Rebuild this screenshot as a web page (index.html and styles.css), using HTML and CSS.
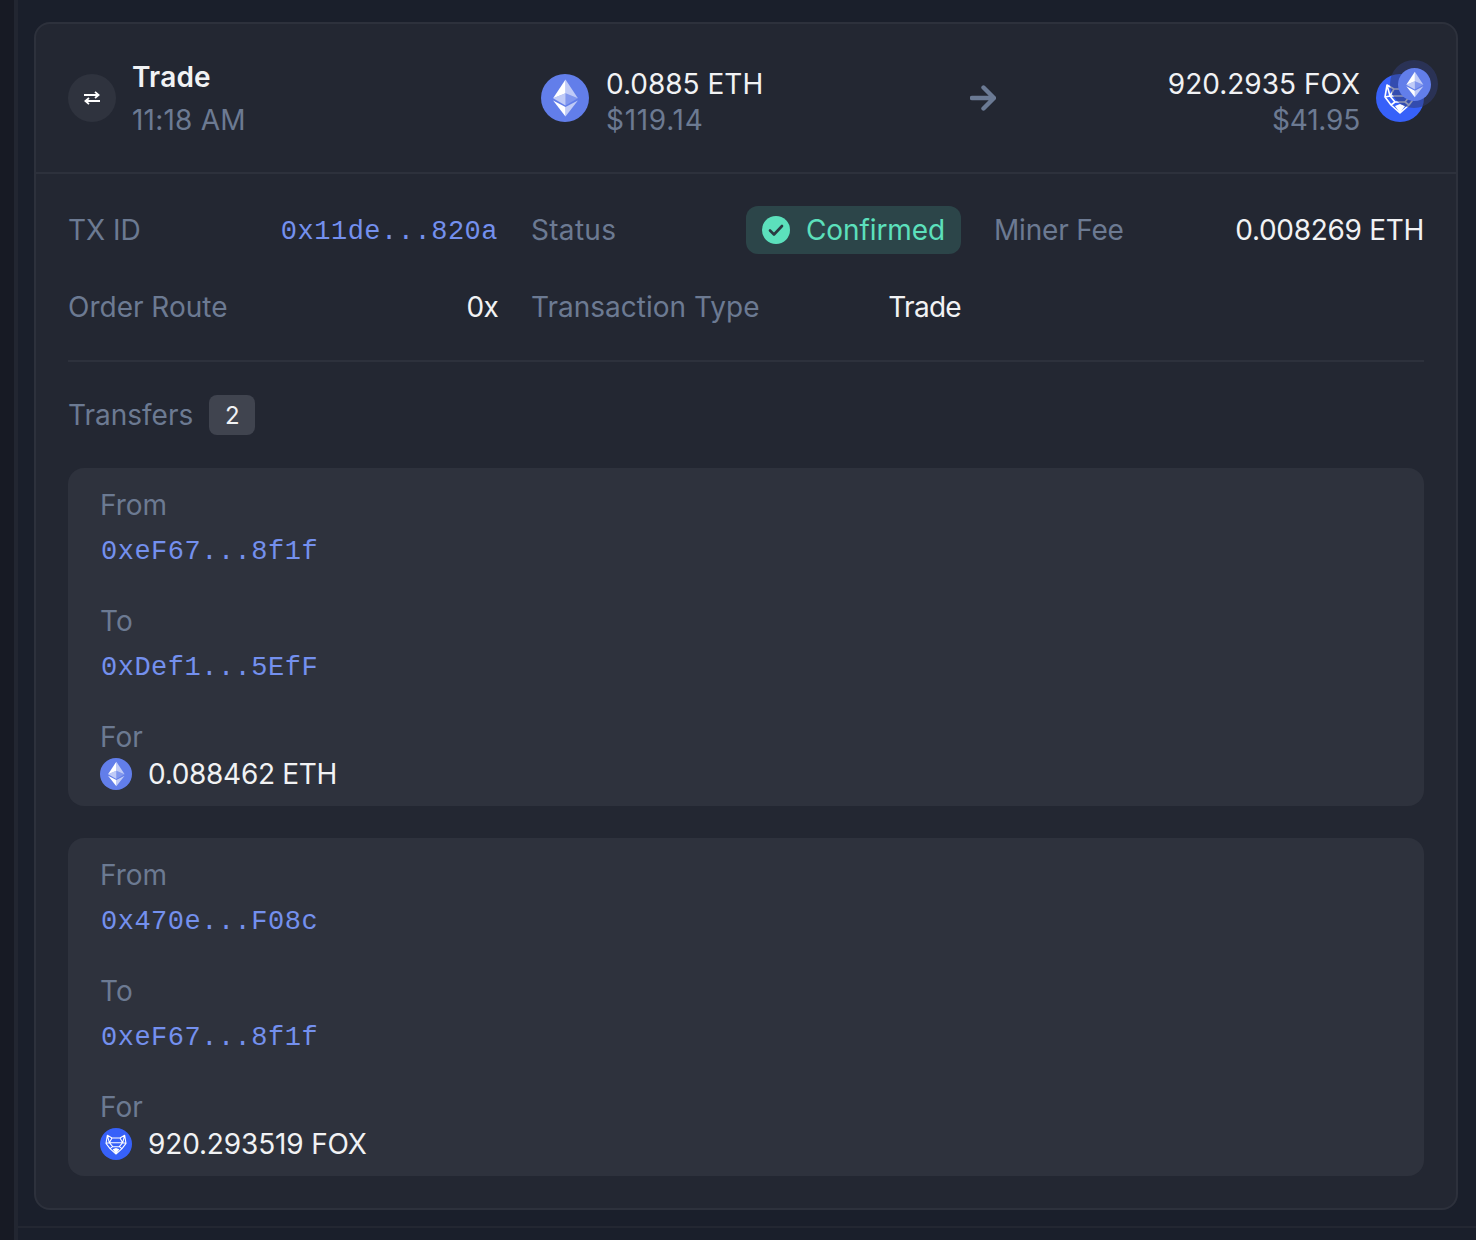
FILE: index.html
```html
<!DOCTYPE html>
<html lang="en">
<head>
<meta charset="utf-8">
<title>Trade</title>
<link rel="stylesheet" href="styles.css">
</head>
<body>
<svg class="sprite" width="0" height="0" aria-hidden="true">
  <symbol id="eth" viewBox="0 0 48 48">
    <circle cx="24" cy="24" r="24" fill="#627eea"/>
    <path d="M24.5 5.500v13.800l12.400 5z" fill="#fff" fill-opacity=".6"/>
    <path d="M24.5 5.500 12.100 24.300l12.400-5z" fill="#fff"/>
    <path d="M24.5 33v9.500l12.400-16z" fill="#fff" fill-opacity=".6"/>
    <path d="M24.5 42.500V33l-12.400-6.500z" fill="#fff"/>
    <path d="m24.5 31.400 12.400-7.100-12.400-5z" fill="#fff" fill-opacity=".2"/>
    <path d="m12.100 24.300 12.400 7.100V19.300z" fill="#fff" fill-opacity=".6"/>
  </symbol>
  <symbol id="fox" viewBox="0 0 48 48">
    <circle cx="24" cy="24" r="24" fill="#3761f9"/>
    <path d="M11 11l7 4h12l7-4 2 12-6 8-9 8-9-8-6-8zM11 11l3 11h20l3-11M9 23l5-1M39 23l-5-1M14 22l5 6h10l5-6M15 31l4-3M33 31l-4-3M18 15l-4 7M30 15l4 7" fill="none" stroke="#fff" stroke-width="1.6" stroke-linejoin="round"/>
    <path d="M19 32l5 7 5-7-5-2z" fill="#fff"/>
  </symbol>
</svg>
<div class="page">
  <div class="rail"></div>
  <main class="content">
    <section class="tx-card">
      <header class="tx-head">
        <div class="tx-kind">
          <span class="kind-icon">
            <svg width="16" height="14" viewBox="0 0 16 14" fill="none" stroke="#fff" stroke-width="1.8"><path d="M0 4h14M11 .8 14.6 4 11 7M16 10H2M5 7 1.400 10 5 13.200" stroke-linejoin="miter"/></svg>
          </span>
          <div class="kind-text">
            <div class="kind-title">Trade</div>
            <div class="muted kind-time">11:18 AM</div>
          </div>
        </div>
        <div class="swap">
          <div class="asset">
            <svg class="icon48"><use href="#eth"/></svg>
            <div class="asset-text">
              <div class="asset-amount">0.0885 ETH</div>
              <div class="asset-fiat fiat-wide">$119.14</div>
            </div>
          </div>
          <svg class="swap-arrow" width="26" height="26" viewBox="0 0 26 26" fill="none" stroke="#6b7a94" stroke-width="4.400" stroke-linecap="round" stroke-linejoin="round"><path d="M2 13h21M13.500 2.500 24 13 13.500 23.500"/></svg>
          <div class="asset asset-right">
            <div class="asset-text">
              <div class="asset-amount">920.2935 FOX</div>
              <div class="asset-fiat">$41.95</div>
            </div>
            <div class="pair">
              <svg class="icon48"><use href="#fox"/></svg>
              <span class="pair-overlay"><svg class="icon33"><use href="#eth"/></svg></span>
            </div>
          </div>
        </div>
      </header>
      <div class="tx-body">
        <div class="facts">
          <div class="fact"><span class="muted">TX ID</span><span class="mono">0x11de...820a</span></div>
          <div class="fact"><span class="muted status-label">Status</span><span class="badge-ok"><svg width="28" height="28" viewBox="0 0 28 28"><circle cx="14" cy="14" r="14" fill="#5ce0bc"/><path d="M8 14.500l4 4 8-8.500" fill="none" stroke="#2a3a42" stroke-width="2.600" stroke-linecap="round" stroke-linejoin="round"/></svg><span class="badge-label">Confirmed</span></span></div>
          <div class="fact"><span class="muted label-tight">Miner Fee</span><span class="value">0.008269 ETH</span></div>
          <div class="fact"><span class="muted">Order Route</span><span class="value value-short">0x</span></div>
          <div class="fact"><span class="muted">Transaction Type</span><span class="value value-short">Trade</span></div>
        </div>
        <hr class="rule">
        <div class="transfers-head"><span class="muted">Transfers</span><span class="count">2</span></div>
        <div class="transfer">
          <div class="muted">From</div>
          <div class="mono addr">0xeF67...8f1f</div>
          <div class="muted">To</div>
          <div class="mono addr">0xDef1...5EfF</div>
          <div class="muted">For</div>
          <div class="amount"><svg class="icon32"><use href="#eth"/></svg>0.088462 ETH</div>
        </div>
        <div class="transfer">
          <div class="muted">From</div>
          <div class="mono addr">0x470e...F08c</div>
          <div class="muted">To</div>
          <div class="mono addr">0xeF67...8f1f</div>
          <div class="muted">For</div>
          <div class="amount amount-fox"><svg class="icon32"><use href="#fox"/></svg>920.293519 FOX</div>
        </div>
      </div>
    </section>
    <div class="foot-line"></div>
  </main>
</div>
</body>
</html>
```

FILE: styles.css
```css
* { box-sizing: border-box; }
html, body { margin: 0; height: 1240px; overflow: hidden; }
body {
  background: #1a1f2b;
  color: #f1f2f4;
  font: 400 28px/42px Inter, "Liberation Sans", sans-serif;
}
.sprite { position: absolute; }
.page { display: flex; height: 1240px; }
.rail { width: 18px; flex: none; background: #171a24; border-right: 4px solid #222631; }
.content { flex: 1; padding: 22px 18px 0 16px; min-width: 0; }
.foot-line { height: 2px; margin: 16px -18px 0 -16px; background: #232732; }

.tx-card { background: #232732; border: 2px solid #2d313c; border-radius: 16px; height: 1188px; }
.tx-head {
  display: grid;
  grid-template-columns: 473px 1fr;
  align-items: center;
  height: 150px;
  padding: 0 32px;
  border-bottom: 2px solid #2d313c;
}
.tx-kind { display: flex; align-items: center; gap: 16px; }
.kind-icon {
  width: 48px; height: 48px; border-radius: 50%;
  background: #2f333e;
  display: flex; align-items: center; justify-content: center;
}
.kind-title { font-weight: 600; line-height: 36px; margin-top: 3px; letter-spacing: .2px; }
.kind-time { line-height: 42px; margin-top: 4px; letter-spacing: .2px; }
.muted { color: #6c7a92; }

.swap { display: grid; grid-template-columns: 1fr auto 1fr; align-items: center; }
.asset { display: flex; align-items: center; gap: 17px; }
.asset-right { justify-content: flex-end; gap: 16px; }
.asset-right .asset-text { text-align: right; }
.asset-amount, .asset-fiat { line-height: 35px; }
.asset-fiat { color: #6c7a92; letter-spacing: -.2px; margin-top: 1px; }
.fiat-wide { letter-spacing: .7px; }
.asset-text { padding-top: 8px; }
.icon48 { width: 48px; height: 48px; display: block; }
.icon33 { width: 33px; height: 33px; display: block; }
.icon32 { width: 32px; height: 32px; display: block; flex: none; }
.pair { position: relative; width: 48px; height: 48px; }
.pair-overlay {
  position: absolute; left: 14px; top: -14px;
  width: 48px; height: 48px; border-radius: 50%;
  background: rgba(50, 60, 115, .55);
  display: flex; align-items: center; justify-content: center;
}

.tx-body { padding: 32px 32px 0; }
.facts { display: grid; grid-template-columns: repeat(3, 1fr); grid-template-rows: 48px 42px; gap: 32px 33px; }
.fact { display: flex; justify-content: space-between; align-items: center; }
.value { letter-spacing: -.3px; }
.value-short { letter-spacing: -.7px; }
.status-label { letter-spacing: .3px; }
.label-tight { letter-spacing: -.2px; }
.mono {
  font-family: "Liberation Mono", monospace;
  font-size: 27px;
  letter-spacing: .5px;
  color: #7490ee;
}
.fact > .mono { padding-top: 4px; }
.badge-ok {
  display: inline-flex; align-items: center; gap: 16px;
  height: 48px; padding: 0 16px;
  border-radius: 12px;
  background: #2c4549;
  color: #5ce0bc;
}
.badge-label { letter-spacing: -.1px; }
.rule { border: 0; height: 2px; background: #2d313c; margin: 32px 0 33px; }
.transfers-head { display: flex; align-items: center; gap: 16px; height: 40px; margin-bottom: 33px; }
.count {
  width: 46px; height: 40px; border-radius: 8px;
  background: #40444f; color: #f1f2f4;
  display: flex; align-items: center; justify-content: center;
  font-size: 24px;
  padding-top: 2px;
}
.transfer {
  background: #2e323d;
  border-radius: 16px;
  padding: 16px 32px;
  height: 338px;
  margin-bottom: 32px;
}
.addr { height: 48px; line-height: 48px; padding: 2px 0 0 1px; margin-bottom: 26px; }
.amount { display: flex; align-items: center; gap: 16px; height: 32px; line-height: 32px; letter-spacing: -.3px; }
.amount-fox { letter-spacing: -.15px; }
```
